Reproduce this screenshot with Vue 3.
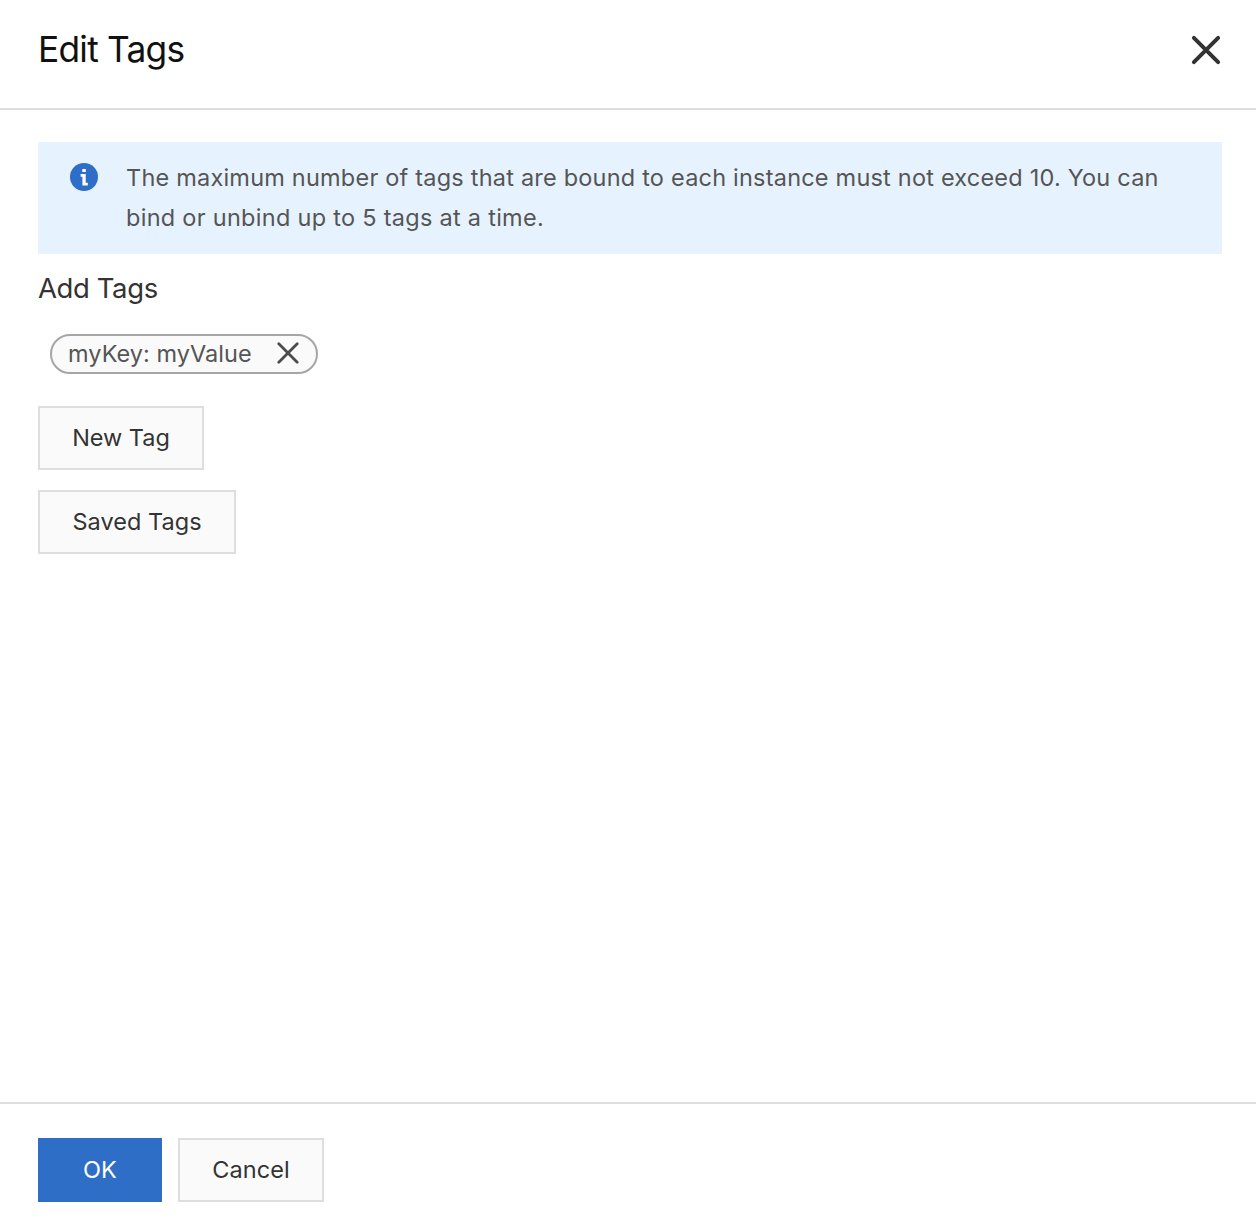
<script setup>
const tags = [{ key: 'myKey', value: 'myValue' }]
</script>

<template>
  <section class="panel">
    <header class="header">
      <h1>Edit Tags</h1>
      <svg class="close" viewBox="0 0 32 32"><path d="M3.900 3.900 28.100 28.100M28.100 3.900 3.900 28.100" /></svg>
    </header>
    <main class="body">
      <div class="notice">
        <svg class="info" viewBox="0 0 28 28">
          <circle cx="14" cy="14" r="14" />
          <path d="M12.300 6h3.500v2.900h-3.500zM10.600 11.100h5.100v8.700h2.100v2.600h-5.400v-8.700h-1.800z" />
        </svg>
        <p><span class="line first">The maximum number of tags that are bound to each instance must not exceed 10. You can</span><span class="line second">bind or unbind up to 5 tags at a time.</span></p>
      </div>
      <h2>Add Tags</h2>
      <div v-for="tag in tags" :key="tag.key" class="tag">
        <span>{{ tag.key }}: {{ tag.value }}</span>
        <svg class="remove" viewBox="0 0 22 22"><path d="M1.800 1.800 20.200 20.200M20.200 1.800 1.800 20.200" /></svg>
      </div>
      <button class="btn new">New Tag</button>
      <button class="btn saved">Saved Tags</button>
    </main>
    <footer class="footer">
      <button class="btn primary">OK</button>
      <button class="btn cancel">Cancel</button>
    </footer>
  </section>
</template>

<style>
body { margin: 0; background: #fff; }
</style>

<style scoped>
* { box-sizing: border-box; }
.panel { width: 1256px; height: 1218px; display: flex; flex-direction: column; font-family: Inter, sans-serif; background: #fff; font-size: 23.5px; letter-spacing: 0.1px; color: #333; }
.header { height: 110px; border-bottom: 2px solid #dedede; padding: 28px 34px 0 38px; display: flex; justify-content: space-between; align-items: flex-start; }
h1 { margin: 0; font-size: 35.3px; line-height: 44px; font-weight: 400; letter-spacing: -0.75px; color: #111; }
.close { width: 32px; height: 32px; margin-top: 6px; }
.close path { stroke: #333; stroke-width: 4; stroke-linecap: round; fill: none; }
.body { flex: 1; padding: 32px 34px 0 38px; display: flex; flex-direction: column; align-items: flex-start; }
.notice { width: 100%; height: 112px; background: #e6f3ff; padding: 16px 32px; display: flex; gap: 28px; color: #555; }
.info { width: 28px; height: 28px; margin-top: 5px; flex: none; }
.info circle { fill: #2e6ec6; }
.info path { fill: #fff; }
p { margin: 0; line-height: 40px; white-space: nowrap; }
.line { display: block; }
.first { letter-spacing: 0.21px; }
.second { letter-spacing: 0.28px; }
h2 { margin: 13px 0 0; height: 43px; line-height: 42px; font-size: 27.5px; font-weight: 400; letter-spacing: -0.4px; }
.tag { margin: 24px 0 0 12px; width: 268px; height: 40px; border: 2px solid #a6a6a6; border-radius: 20px; background: #fafafa; padding: 0 17px 2px 16px; display: flex; align-items: center; justify-content: space-between; letter-spacing: 0.04px; color: #555; white-space: nowrap; }
.remove { width: 22px; height: 22px; }
.remove path { stroke: #4c4c4c; stroke-width: 2.8; stroke-linecap: round; fill: none; }
.btn { height: 64px; padding: 0 0 2px; border: 2px solid #dedede; border-radius: 0; background: #fafafa; font: inherit; letter-spacing: inherit; color: #333; white-space: nowrap; }
.new { width: 166px; margin-top: 32px; letter-spacing: -0.03px; }
.saved { width: 198px; margin-top: 20px; letter-spacing: 0.04px; }
.footer { height: 116px; border-top: 2px solid #dedede; padding: 34px 38px 0; display: flex; gap: 16px; }
.primary { width: 124px; background: #2e6ec6; border-color: #2e6ec6; color: #fff; }
.cancel { width: 146px; }
</style>
